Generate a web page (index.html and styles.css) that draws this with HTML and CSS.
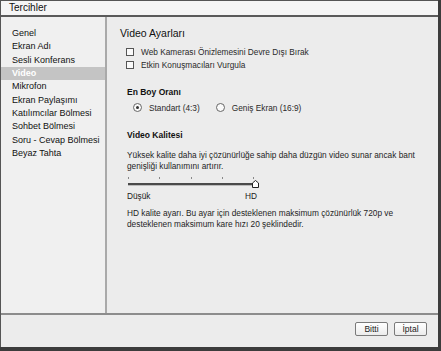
FILE: index.html
```html
<!DOCTYPE html>
<html lang="tr">
<head>
<meta charset="utf-8">
<title>Tercihler</title>
<link rel="stylesheet" href="styles.css">
</head>
<body>
<div class="window">
  <div class="titlebar">Tercihler</div>
  <div class="content">
    <ul class="sidebar">
      <li>Genel</li>
      <li>Ekran Adı</li>
      <li>Sesli Konferans</li>
      <li class="selected">Video</li>
      <li>Mikrofon</li>
      <li>Ekran Paylaşımı</li>
      <li>Katılımcılar Bölmesi</li>
      <li>Sohbet Bölmesi</li>
      <li>Soru - Cevap Bölmesi</li>
      <li>Beyaz Tahta</li>
    </ul>
    <div class="main">
      <h1 class="heading">Video Ayarları</h1>
      <div class="checks">
        <label class="check"><span class="box"></span>Web Kamerası Önizlemesini Devre Dışı Bırak</label>
        <label class="check"><span class="box"></span>Etkin Konuşmacıları Vurgula</label>
      </div>
      <div class="section">
        <h2 class="subhead">En Boy Oranı</h2>
        <div class="radios">
          <label class="radio"><span class="circle on"></span>Standart (4:3)</label>
          <label class="radio"><span class="circle"></span>Geniş Ekran (16:9)</label>
        </div>
      </div>
      <div class="section quality">
        <h2 class="subhead">Video Kalitesi</h2>
        <p class="text">Yüksek kalite daha iyi çözünürlüğe sahip daha düzgün video sunar ancak bant<br>genişliği kullanımını artırır.</p>
        <div class="slider">
          <div class="ticks"><span></span><span></span><span></span><span></span><span></span></div>
          <div class="track">
            <svg class="thumb" width="7" height="8" viewBox="0 0 7 8"><path d="M0.5 7.5 V3 L3.5 0.5 L6.5 3 V7.5 Z" fill="#fff" stroke="#222" stroke-width="1"/></svg>
          </div>
          <div class="labels"><span>Düşük</span><span>HD</span></div>
        </div>
        <p class="text second">HD kalite ayarı. Bu ayar için desteklenen maksimum çözünürlük 720p ve<br>desteklenen maksimum kare hızı 20 şeklindedir.</p>
      </div>
    </div>
  </div>
  <div class="footer">
    <button class="btn">Bitti</button>
    <button class="btn">İptal</button>
  </div>
</div>
</body>
</html>
```

FILE: styles.css
```css
* { box-sizing: border-box; }
html, body { margin: 0; padding: 0; }
body {
  background: #3c3c3c;
  width: 441px;
  height: 351px;
  font-family: "Liberation Sans", Arial, sans-serif;
  color: #1a1a1a;
}
.window {
  width: 438px;
  height: 347px;
  border-left: 1px solid #555;
  border-top: 1px solid #555;
  display: flex;
  flex-direction: column;
  background: #ececec;
}
.titlebar {
  height: 16px;
  background: #f5f5f5;
  border-bottom: 2px solid #5a5a5a;
  font-size: 10px;
  line-height: 14px;
  padding-left: 8px;
  color: #111;
}
.content {
  flex: 1;
  display: flex;
  border-bottom: 2px solid #8c8c8c;
  min-height: 0;
}
.sidebar {
  list-style: none;
  margin: 0;
  padding: 10px 0 0 0;
  width: 106px;
  background: #f0f0f0;
  border-right: 2px solid #a9a9a9;
  font-size: 9px;
}
.sidebar li {
  height: 13.33px;
  line-height: 13.33px;
  padding-left: 11px;
  color: #111;
  white-space: nowrap;
}
.sidebar li.selected {
  background: #c4c4c4;
  color: #fff;
  font-weight: bold;
}
.main {
  flex: 1;
  padding: 10px 0 0 13px;
  font-size: 8.3px;
}
.heading {
  margin: 0;
  font-size: 10.5px;
  font-weight: normal;
  line-height: 13px;
  color: #111;
}
.checks {
  display: flex;
  flex-direction: column;
  padding: 5px 0 0 6px;
}
.check {
  display: flex;
  align-items: center;
  height: 13px;
  color: #2a2a2a;
  white-space: nowrap;
}
.box {
  width: 8px;
  height: 8px;
  border: 1px solid #555;
  background: #fafafa;
  margin-right: 7px;
}
.section {
  padding: 16px 0 0 7px;
}
.subhead {
  margin: 0;
  font-size: 8.5px;
  font-weight: bold;
  line-height: 11px;
  color: #111;
}
.radios {
  display: flex;
  padding: 4px 0 0 6px;
}
.radio {
  display: flex;
  align-items: center;
  height: 11px;
  margin-right: 16px;
  white-space: nowrap;
  color: #2a2a2a;
}
.circle {
  width: 9px;
  height: 9px;
  border: 1px solid #666;
  border-radius: 50%;
  background: #fafafa;
  margin-right: 7px;
  display: flex;
  align-items: center;
  justify-content: center;
}
.circle.on::after {
  content: "";
  width: 3px;
  height: 3px;
  border-radius: 50%;
  background: #333;
}
.quality {
  padding-top: 17px;
}
.text {
  margin: 9px 0 0 0;
  line-height: 11px;
  color: #1e1e1e;
  white-space: nowrap;
}
.text.second {
  margin-top: 6px;
}
.slider {
  width: 130px;
  padding-top: 5px;
}
.ticks {
  display: flex;
  justify-content: space-between;
  width: 126px;
  margin-left: 1px;
}
.ticks span {
  width: 1px;
  height: 2px;
  background: #888;
}
.track {
  position: relative;
  margin-top: 4px;
  width: 127px;
  margin-left: 1px;
  background: #4a4a4a;
  border-bottom: 1px solid #bbb;
  height: 3px;
}
.thumb {
  position: absolute;
  right: -4px;
  top: -3px;
}
.labels {
  display: flex;
  justify-content: space-between;
  width: 130px;
  margin-top: 5px;
  line-height: 11px;
}
.footer {
  height: 32px;
  display: flex;
  justify-content: flex-end;
  align-items: flex-start;
  gap: 6px;
  padding: 7px 11px 0 0;
}
.btn {
  height: 14px;
  min-width: 33px;
  padding: 0 6px;
  border: 1px solid #7a7a7a;
  border-radius: 2px;
  background: linear-gradient(#ffffff, #ececec);
  font-family: "Liberation Sans", Arial, sans-serif;
  font-size: 8.5px;
  line-height: 12px;
  color: #1a1a1a;
}
```
